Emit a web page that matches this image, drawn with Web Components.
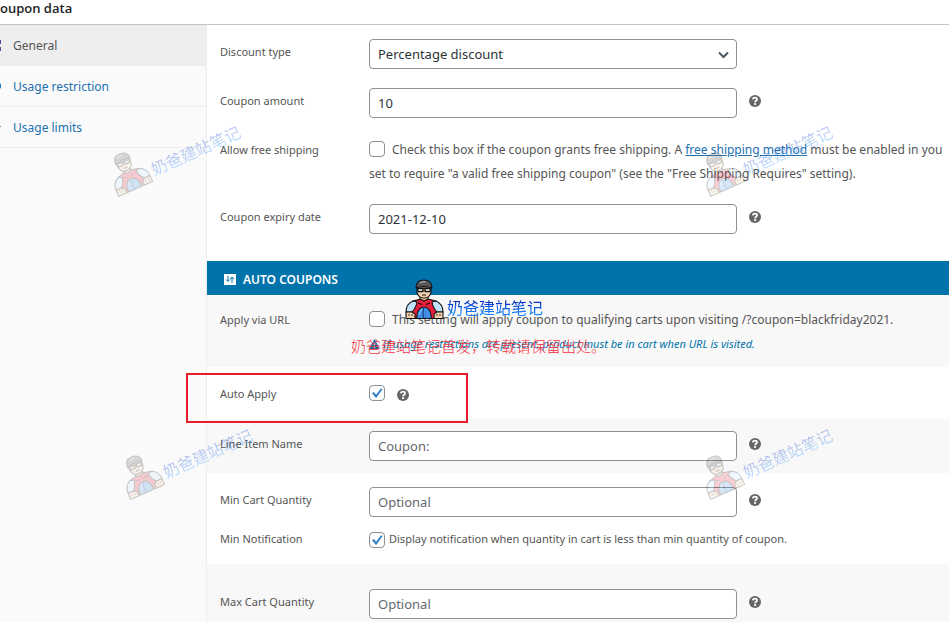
<!DOCTYPE html>
<html lang="en">
<head>
<meta charset="utf-8">
<title>Coupon data</title>
<style>
	html, body { margin: 0; height: 100%; overflow: hidden; }
	body {
		font-family: "Noto Sans", "Noto Sans CJK SC", sans-serif;
		font-size: 12px;
		color: #555;
		background: #fff;
	}
	a { color: #2271b1; }
	.tip { color: #0073aa; font-size: 11px; font-style: italic; }
	.tip svg { vertical-align: -1px; }
</style>
</head>
<body>
<coupon-panel>
	<span slot="title">oupon data</span>
	<coupon-tab slot="tabs" icon="ticket" active>General</coupon-tab>
	<coupon-tab slot="tabs" icon="block">Usage restriction</coupon-tab>
	<coupon-tab slot="tabs" icon="limit">Usage limits</coupon-tab>

	<coupon-group class="general">
		<coupon-select label="Discount type" value="Percentage discount"></coupon-select>
		<coupon-input label="Coupon amount" value="10" help></coupon-input>
		<coupon-check label="Allow free shipping">Check this box if the coupon grants free shipping. A <a href="#shipping">free shipping method</a> must be enabled in you<br>set to require "a valid free shipping coupon" (see the "Free Shipping Requires" setting).</coupon-check>
		<coupon-input label="Coupon expiry date" value="2021-12-10" help></coupon-input>
	</coupon-group>
	<coupon-band>AUTO COUPONS</coupon-band>
	<coupon-group shaded>
		<coupon-check label="Apply via URL">This setting will apply coupon to qualifying carts upon visiting /?coupon=blackfriday2021.<br><span class="tip"><svg width="11" height="10" viewBox="0 0 12 11"><path d="M6 0L12 11H0z" fill="#0073aa"/><path d="M6 4v3M6 8.5v1" stroke="#fff" stroke-width="1.4"/></svg> If usage restrictions are present, product must be in cart when URL is visited.</span></coupon-check>
	</coupon-group>
	<coupon-group>
		<coupon-check label="Auto Apply" checked help></coupon-check>
	</coupon-group>
	<coupon-group shaded>
		<coupon-input label="Line Item Name" placeholder="Coupon:" help></coupon-input>
	</coupon-group>
	<coupon-group class="compact">
		<coupon-input label="Min Cart Quantity" placeholder="Optional" help></coupon-input>
		<coupon-check label="Min Notification" checked small>Display notification when quantity in cart is less than min quantity of coupon.</coupon-check>
	</coupon-group>
	<coupon-group class="last" shaded>
		<coupon-input label="Max Cart Quantity" placeholder="Optional" help></coupon-input>
	</coupon-group>
</coupon-panel>

<mark-box></mark-box>
<site-stamp style="left:104px;top:131px" faded>奶爸建站笔记</site-stamp>
<site-stamp style="left:696px;top:131px" faded>奶爸建站笔记</site-stamp>
<site-stamp style="left:116px;top:434px" faded>奶爸建站笔记</site-stamp>
<site-stamp style="left:696px;top:434px" faded>奶爸建站笔记</site-stamp>
<site-stamp style="left:405px;top:279px">奶爸建站笔记</site-stamp>
<site-notice>奶爸建站笔记首发，转载请保留出处。</site-notice>

<script>
// shared by every field row
const fieldStyles = `
	:host {
		display: grid;
		grid-template-columns: 149px minmax(0, 1fr);
		padding-left: 13px;
	}
	label { line-height: 26px; font-size: 11px; margin-bottom: -2px; }
	.control { display: flex; min-width: 0; }
	input:not([type]), select {
		box-sizing: border-box;
		flex: 0 1 368px;
		width: 368px;
		min-width: 0;
		height: 30px;
		padding: 0 8px;
		border: 1px solid #8c8f94;
		border-radius: 4px;
		background: #fff;
		color: #2c3338;
		font-family: inherit;
		font-size: 13px;
	}
	input::placeholder { color: #646970; opacity: 1; }
	help-tip { margin: 7px 0 0 12px; }
`;

class HelpTip extends HTMLElement {
	constructor() {
		super();
		this.attachShadow({ mode: 'open' });
		this.shadowRoot.innerHTML = `
			<style>
				:host { display: inline-block; width: 12px; height: 12px; }
				svg { display: block; }
			</style>
			<svg width="12" height="12" viewBox="0 0 12 12">
				<circle cx="6" cy="6" r="6" fill="#666"/>
				<path d="M3.9 4.4C4 1.9 8.2 2 8.1 4.3C8 5.8 6.1 5.6 6.1 7.3" fill="none" stroke="#fff" stroke-width="1.8"/>
				<rect x="5.1" y="8.1" width="2" height="1.8" fill="#fff"/>
			</svg>
		`;
	}
}
customElements.define('help-tip', HelpTip);

class CouponInput extends HTMLElement {
	constructor() {
		super();
		this.attachShadow({ mode: 'open' });
	}

	connectedCallback() {
		this.shadowRoot.innerHTML = `
			<style>${fieldStyles}</style>
			<label for="field">${this.getAttribute('label')}</label>
			<div class="control">
				<input id="field">
				${this.hasAttribute('help') ? '<help-tip></help-tip>' : ''}
			</div>
		`;
		const input = this.shadowRoot.querySelector('input');
		input.value = this.getAttribute('value') || '';
		input.placeholder = this.getAttribute('placeholder') || '';
	}
}
customElements.define('coupon-input', CouponInput);

class CouponSelect extends HTMLElement {
	constructor() {
		super();
		this.attachShadow({ mode: 'open' });
	}

	connectedCallback() {
		this.shadowRoot.innerHTML = `
			<style>
				${fieldStyles}
				.box { position: relative; flex: 0 1 368px; display: flex; }
				select { appearance: none; }
				svg { position: absolute; right: 8px; top: 12px; pointer-events: none; }
			</style>
			<label for="field">${this.getAttribute('label')}</label>
			<div class="control">
				<div class="box">
					<select id="field">
						<option>${this.getAttribute('value')}</option>
						<option>Fixed cart discount</option>
						<option>Fixed product discount</option>
					</select>
					<svg width="11" height="8" viewBox="0 0 11 8"><path d="M1 1.5l4.5 4.5L10 1.5" fill="none" stroke="#50575e" stroke-width="2"/></svg>
				</div>
			</div>
		`;
	}
}
customElements.define('coupon-select', CouponSelect);

class CouponCheck extends HTMLElement {
	constructor() {
		super();
		this.attachShadow({ mode: 'open' });
	}

	connectedCallback() {
		this.shadowRoot.innerHTML = `
			<style>
				${fieldStyles}
				.control {
					display: block;
					padding-top: 1px;
					margin-bottom: -1px;
					line-height: 24px;
					white-space: nowrap;
				}
				:host([small]) .control { font-size: 11px; }
				.tick {
					display: inline-grid;
					place-items: center;
					width: 16px;
					height: 16px;
					margin-right: 7px;
					vertical-align: -3px;
				}
				:host([small]) .tick { margin-right: 4px; vertical-align: -5px; }
				.tick > * { grid-area: 1 / 1; }
				input[type] {
					appearance: none;
					box-sizing: border-box;
					width: 16px;
					height: 16px;
					margin: 0;
					border: 1px solid #8c8f94;
					border-radius: 4px;
					background: #fff;
				}
				svg { display: none; pointer-events: none; z-index: 1; }
				input:checked + svg { display: block; }
				help-tip { margin: 2px 0 0 5px; vertical-align: -3px; }
			</style>
			<label for="field">${this.getAttribute('label')}</label>
			<div class="control">
				<span class="tick">
					<input type="checkbox" id="field">
					<svg width="12" height="12" viewBox="0 0 12 12"><path d="M1 6.2L3 5L5 7.7L10 1.2L11.5 2.2L5.4 10.8H4.7z" fill="#3582c4"/></svg>
				</span><slot></slot>${this.hasAttribute('help') ? '<help-tip></help-tip>' : ''}
			</div>
		`;
		this.shadowRoot.querySelector('input').checked = this.hasAttribute('checked');
	}
}
customElements.define('coupon-check', CouponCheck);

class CouponGroup extends HTMLElement {
	constructor() {
		super();
		this.attachShadow({ mode: 'open' });
		this.shadowRoot.innerHTML = `
			<style>
				:host { display: flex; flex-direction: column; gap: 19px; padding: 14px 0; }
				:host([shaded]) { background: #f8f8f8; padding: 12px 0; }
				:host(.general) { padding-bottom: 27px; }
				:host(.compact) { gap: 9px; }
				:host(.last) { padding: 25px 0; }
			</style>
			<slot></slot>
		`;
	}
}
customElements.define('coupon-group', CouponGroup);

class CouponBand extends HTMLElement {
	constructor() {
		super();
		this.attachShadow({ mode: 'open' });
		this.shadowRoot.innerHTML = `
			<style>
				:host { display: block; background: #0073aa; color: #fff; }
				h3 {
					display: flex;
					align-items: center;
					gap: 7px;
					height: 34px;
					margin: 0;
					padding: 2px 17px 0;
					box-sizing: border-box;
					font-size: 12px;
					font-weight: 600;
				}
			</style>
			<h3>
				<svg width="12" height="11" viewBox="0 0 12 11">
					<rect width="12" height="11" fill="#fff"/>
					<path d="M4 2v5M2 5.5l2 2 2-2M8 9V4M6.3 5L8 3l2 2" fill="none" stroke="#0073aa"/>
				</svg>
				<slot></slot>
			</h3>
		`;
	}
}
customElements.define('coupon-band', CouponBand);

class CouponTab extends HTMLElement {
	constructor() {
		super();
		this.attachShadow({ mode: 'open' });
	}

	connectedCallback() {
		// the glyphs run off the left edge, so only their right side is drawn
		const icons = {
			ticket: '<path d="M0 1h1v4H0zM0 8h1v4H0z" fill="#50509a"/>',
			block: '<path d="M0 3q1 1 1 3q0 2-1 3z" fill="#0073c8"/>',
			limit: '<path d="M0 5h1v1H0z" fill="#8080b0"/>'
		};
		this.shadowRoot.innerHTML = `
			<style>
				:host { display: block; border-bottom: 1px solid #eee; }
				a {
					display: flex;
					align-items: center;
					gap: 11px;
					height: 40px;
					color: #2271b1;
					text-decoration: none;
				}
				:host([active]) { background: #eee; }
				:host([active]) a { color: #555; }
			</style>
			<a href="#"><svg width="2" height="13" viewBox="0 0 2 13">${icons[this.getAttribute('icon')]}</svg><slot></slot></a>
		`;
	}
}
customElements.define('coupon-tab', CouponTab);

class CouponPanel extends HTMLElement {
	constructor() {
		super();
		this.attachShadow({ mode: 'open' });
		this.shadowRoot.innerHTML = `
			<style>
				:host { display: block; }
				header { padding-bottom: 8px; border-bottom: 1px solid #c3c4c7; }
				h2 { margin: 0; color: #1d2327; font: 600 13px/16px "Open Sans", sans-serif; }
				.body { display: grid; grid-template-columns: 206px minmax(0, 1fr); }
				nav { background: #fafafa; border-right: 1px solid #eee; margin-right: -1px; }
				main { margin-left: 1px; min-width: 0; overflow: hidden; }
			</style>
			<header><h2><slot name="title"></slot></h2></header>
			<div class="body">
				<nav><slot name="tabs"></slot></nav>
				<main><slot></slot></main>
			</div>
		`;
	}
}
customElements.define('coupon-panel', CouponPanel);

class MarkBox extends HTMLElement {
	constructor() {
		super();
		this.attachShadow({ mode: 'open' });
		this.shadowRoot.innerHTML = `
			<style>
				:host {
					position: absolute;
					left: 186px;
					top: 373px;
					width: 278px;
					height: 46px;
					border: 2px solid #e81c28;
					pointer-events: none;
				}
			</style>
		`;
	}
}
customElements.define('mark-box', MarkBox);

class SiteStamp extends HTMLElement {
	constructor() {
		super();
		this.attachShadow({ mode: 'open' });
		this.shadowRoot.innerHTML = `
			<style>
				:host {
					position: absolute;
					display: flex;
					align-items: flex-end;
					gap: 3px;
					font: 16px/24px "Noto Sans CJK SC", sans-serif;
					white-space: nowrap;
					pointer-events: none;
				}
				:host([faded]) { opacity: 0.28; transform: rotate(-24deg); }
				:host([faded]) svg { opacity: 0.8; }
				.name {
					background: linear-gradient(#0028c0 25%, #1487ff 80%);
					background-clip: text;
					-webkit-background-clip: text;
					color: transparent;
				}
			</style>
			<svg width="39" height="40" viewBox="0 0 39 40" stroke="#111" stroke-width="1.1" stroke-linejoin="round">
				<path d="M8 22l8-2h7l8 2l4 9v8.5H4V31z" fill="#e8203c"/>
				<path d="M8 22l4 1q-1 6-5 10H1q0-8 7-11zM31 22l-4 1q1 6 5 10h6q0-8-7-11z" fill="#c3e3fb"/>
				<path d="M15 17v3l4 2l4-2v-3z" fill="#e8bd96"/>
				<path d="M12 8v5q1 6 7 6q6 0 7-6V8z" fill="#f4d0aa"/>
				<path d="M11 9Q11 1 19 1Q27 1 27 9Q19 6 11 9z" fill="#55575d"/>
				<path d="M15 4q3-2 6-1" stroke="#aaa" fill="none"/>
				<path d="M12.5 9.5h5.5v3h-5zM20 9.5h5.5l-.5 3h-5z" fill="#fff" stroke-width="1.3"/>
				<path d="M18 10h2M17 16h4M13 24l4 1.5M25 24l-4 1.5" fill="none"/>
				<path d="M12 39.5C11 31 16 28 19 28S27 31 26 39.5z" fill="#438ee5"/>
				<path d="M14.5 36q0-4 3-6" stroke="#8fc4fa" fill="none"/>
				<path d="M19 28q-2 6 0 11" fill="none" stroke="#123a78"/>
				<path d="M1 33h6l3 2v4.5H1zM38 33h-6l-3 2v4.5h9z" fill="#f4d0aa"/>
				<path d="M4 35v2M7 35v2M32 35v2M35 35v2" fill="none" stroke-width=".8"/>
			</svg>
			<span class="name"><slot></slot></span>
		`;
	}
}
customElements.define('site-stamp', SiteStamp);

class SiteNotice extends HTMLElement {
	constructor() {
		super();
		this.attachShadow({ mode: 'open' });
		this.shadowRoot.innerHTML = `
			<style>
				:host {
					position: absolute;
					left: 351px;
					top: 334px;
					color: #f5333f;
					font: 300 15px/24px "Noto Sans CJK SC", sans-serif;
					white-space: nowrap;
					pointer-events: none;
				}
			</style>
			<slot></slot>
		`;
	}
}
customElements.define('site-notice', SiteNotice);
</script>
</body>
</html>
